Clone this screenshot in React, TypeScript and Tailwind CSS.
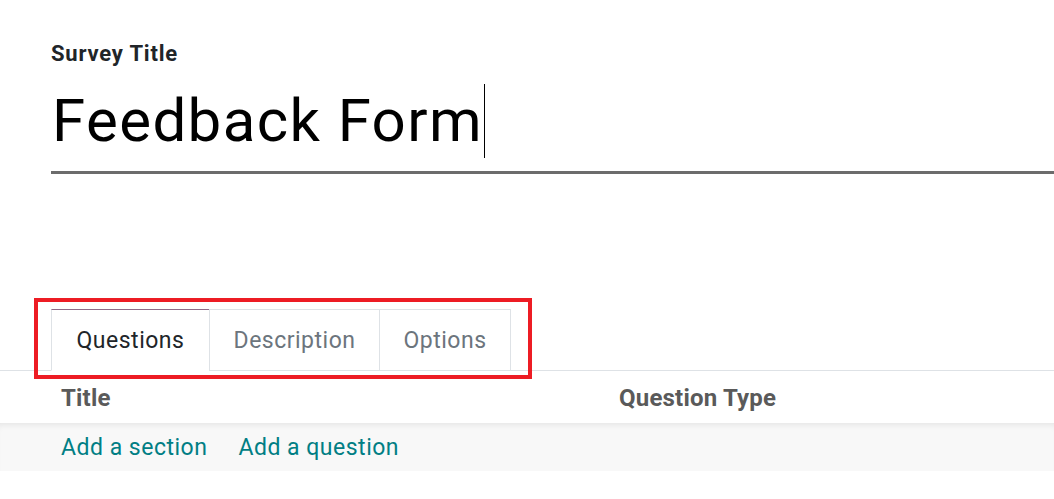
import React from "react";

const tabs = [
  { label: "Questions", w: "w-[159px]" },
  { label: "Description", w: "w-[171px]" },
  { label: "Options", w: "w-[132px]" },
];

const App = () => {
  return (
    <div className="w-[1054px] h-[499px] overflow-hidden bg-white font-['Roboto',sans-serif]">
      <div className="pl-[51px] pt-[42px]">
        <div className="text-[22px] leading-[24px] font-bold tracking-[0.8px] text-[#212529]">Survey Title</div>
        <div className="mt-[18px] flex items-center border-b-[3px] border-[#6c6c6c] pb-[13px] pl-[1px]">
          <span className="text-[60px] leading-[70px] tracking-[1.4px] text-black">Feedback Form</span>
          <span className="ml-[1px] h-[74px] w-px bg-black" />
        </div>
      </div>

      <div className="relative mt-[135px]">
        <div className="flex border-b border-[#dee2e6] pl-[51px]">
          {tabs.map((t, i) => (
            <div
              key={t.label}
              className={
                i === 0
                  ? `${t.w} -mb-px h-[62px] border border-[#dee2e6] border-t-[#8f6b88] border-b-white bg-white pt-[17px] text-center text-[23px] leading-[28px] tracking-[0.5px] text-[#212529]`
                  : `${t.w} -mb-px -ml-px h-[62px] border border-[#dee2e6] pt-[17px] text-center text-[23px] leading-[28px] tracking-[0.5px] text-[#6c757d]`
              }
            >
              {t.label}
            </div>
          ))}
        </div>
        <div className="pointer-events-none absolute left-[34px] top-[-11px] h-[81px] w-[498px] border-4 border-[#ed1c24]" />

        <div className="flex h-[52px] items-center pt-[2px] text-[24px] font-bold tracking-[0.2px] text-[#5a5a5a]">
          <div className="w-[619px] pl-[61px]">Title</div>
          <div>Question Type</div>
        </div>
        <div className="flex h-[48px] items-center gap-[31px] bg-[#f8f8f8] pl-[61px] pt-[3px] text-[23px] tracking-[0.5px] text-[#017e84] shadow-[inset_0_6px_6px_-4px_rgba(0,0,0,0.08)]">
          <span>Add a section</span>
          <span>Add a question</span>
        </div>
      </div>
    </div>
  );
};

export default App;
